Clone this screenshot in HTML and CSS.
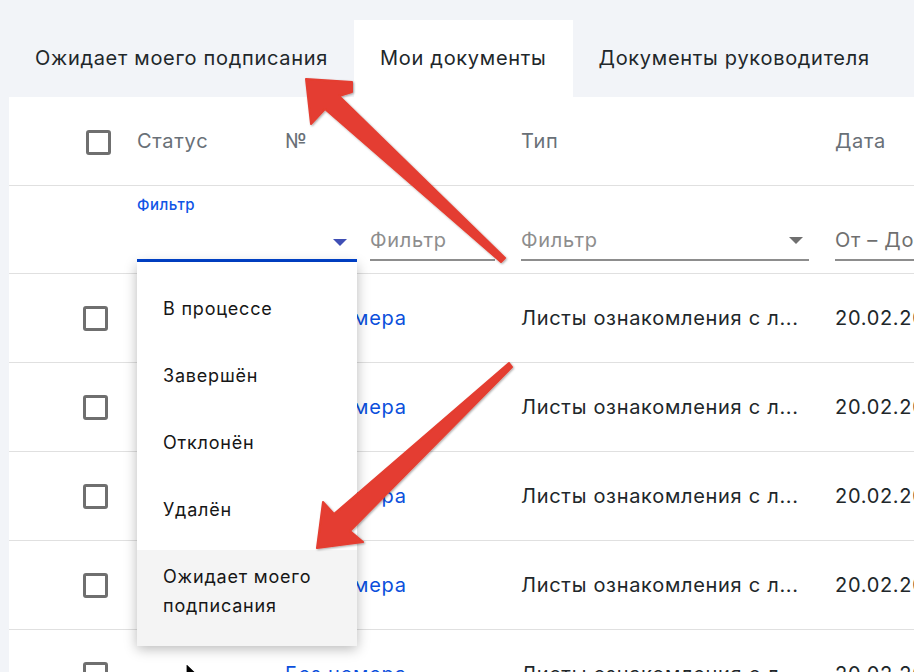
FILE: index.html
```html
<!DOCTYPE html>
<html lang="ru">
<head>
  <meta charset="UTF-8">
  <title>Мои документы</title>
  <link rel="stylesheet" href="styles.css">
</head>
<body>
  <div class="tabs">
    <div class="tab">Ожидает моего подписания</div>
    <div class="tab active">Мои документы</div>
    <div class="tab">Документы руководителя</div>
  </div>

  <div class="panel">
    <div class="row head">
      <div class="check"><span class="box"></span></div>
      <div class="c-status">Статус</div>
      <div class="c-num">№</div>
      <div class="c-type">Тип</div>
      <div class="c-date">Дата</div>
    </div>

    <div class="filters">
      <div class="f-status">
        <label>Фильтр</label>
        <div class="select"><span class="caret blue"></span></div>
        <ul class="menu">
          <li>В процессе</li>
          <li>Завершён</li>
          <li>Отклонён</li>
          <li>Удалён</li>
          <li class="hover">Ожидает моего подписания</li>
        </ul>
      </div>
      <div class="field f-num">Фильтр</div>
      <div class="field f-type">Фильтр <span class="caret"></span></div>
      <div class="field f-date">От – До</div>
    </div>

    <div class="row">
      <div class="check"><span class="box"></span></div>
      <div class="c-status"></div>
      <div class="c-num"><a href="#">Без номера</a></div>
      <div class="c-type">Листы ознакомления с л...</div>
      <div class="c-date">20.02.2024</div>
    </div>
    <div class="row">
      <div class="check"><span class="box"></span></div>
      <div class="c-status"></div>
      <div class="c-num"><a href="#">Без номера</a></div>
      <div class="c-type">Листы ознакомления с л...</div>
      <div class="c-date">20.02.2024</div>
    </div>
    <div class="row">
      <div class="check"><span class="box"></span></div>
      <div class="c-status"></div>
      <div class="c-num"><a href="#">Без номера</a></div>
      <div class="c-type">Листы ознакомления с л...</div>
      <div class="c-date">20.02.2024</div>
    </div>
    <div class="row">
      <div class="check"><span class="box"></span></div>
      <div class="c-status"></div>
      <div class="c-num"><a href="#">Без номера</a></div>
      <div class="c-type">Листы ознакомления с л...</div>
      <div class="c-date">20.02.2024</div>
    </div>
    <div class="row">
      <div class="check"><span class="box"></span></div>
      <div class="c-status"></div>
      <div class="c-num"><a href="#" class="under">Без номера</a></div>
      <div class="c-type">Листы ознакомления с л...</div>
      <div class="c-date">20.02.2024</div>
    </div>
  </div>

  <!-- annotation arrows drawn over the screenshot -->
  <svg class="arrows" width="914" height="672" viewBox="0 0 914 672">
    <defs>
      <filter id="sh" x="-10%" y="-10%" width="130%" height="130%">
        <feDropShadow dx="1" dy="1" stdDeviation="0.8" flood-color="#000" flood-opacity="0.35"/>
      </filter>
    </defs>
    <g fill="#e43d30" stroke="#e43d30" stroke-width="2" stroke-linejoin="round" filter="url(#sh)">
      <polygon points="306,79 352,82 352,92 339,96 505,258 501,262 325,109 311,124"/>
      <polygon points="317,548 323,502 334,514 509,363 512,367 350,531 363,542"/>
    </g>
  </svg>

  <svg class="cursor" width="16" height="24" viewBox="0 0 16 24">
    <path d="M1 1 L1 19 L5.5 14.5 L8.5 21.5 L11 20.5 L8 13.5 L14 13.5 Z" fill="#000" stroke="#fff" stroke-width="1.2" stroke-linejoin="round"/>
  </svg>
</body>
</html>
```

FILE: styles.css
```css
html, body {
  margin: 0;
  height: 100%;
  overflow: hidden;
}
body {
  background: #f2f4f8;
  font-family: 'Inter', sans-serif;
  color: #21272a;
  font-size: 20px;
  letter-spacing: 0.7px;
  position: relative;
}
.tabs {
  display: flex;
  padding-top: 20px;
  margin-left: 9px;
}
.tab {
  height: 77px;
  line-height: 77px;
  padding: 0 26px;
  white-space: nowrap;
}
.tab.active {
  background: #fff;
}
.panel {
  margin-left: 9px;
  width: 1100px;
  background: #fff;
}
.row {
  display: grid;
  grid-template-columns: 128px 148px 236px 314px 274px;
  height: 88px;
  align-items: center;
  border-bottom: 1px solid #e0e0e0;
  white-space: nowrap;
}
.row.head {
  color: #697077;
}
.check {
  padding-left: 74px;
  display: flex;
}
.head .check {
  padding-left: 77px;
}
.box {
  width: 19px;
  height: 19px;
  border: 3px solid #6f6f6f;
  border-radius: 3px;
}
.head .box {
  margin-top: 2px;
}
.row a {
  color: #0b4fdc;
  text-decoration: none;
}
.row a.under {
  text-decoration: underline;
}
.filters {
  display: flex;
  align-items: flex-end;
  height: 88px;
  padding-bottom: 11px;
  box-sizing: border-box;
  border-bottom: 1px solid #e0e0e0;
}
.f-status {
  position: relative;
  margin-left: 128px;
  width: 220px;
}
.f-status label {
  display: block;
  font-size: 15px;
  font-weight: 500;
  letter-spacing: 0.5px;
  color: #0f55e6;
  margin-bottom: 11px;
}
.select {
  height: 34px;
  border-bottom: 3px solid #0043ce;
  display: flex;
  justify-content: flex-end;
  align-items: center;
  padding-right: 10px;
}
.caret {
  width: 0;
  height: 0;
  border-left: 7px solid transparent;
  border-right: 7px solid transparent;
  border-top: 7px solid #6f6f6f;
}
.caret.blue {
  border-top-color: #3f4fb5;
}
.field {
  height: 38px;
  border-bottom: 2px solid #8d8d8d;
  color: #8d8d8d;
  display: flex;
  align-items: center;
  justify-content: space-between;
  white-space: nowrap;
  margin-bottom: 1px;
}
.f-num {
  margin-left: 13px;
  width: 125px;
}
.f-type {
  margin-left: 26px;
  width: 282px;
  padding-right: 6px;
}
.f-date {
  margin-left: 26px;
  width: 200px;
  color: #6f6f6f;
}
.menu {
  position: absolute;
  top: 100%;
  left: 0;
  width: 220px;
  margin: 0;
  padding: 20px 0 0;
  list-style: none;
  background: #fff;
  box-shadow: 0 3px 12px rgba(0, 0, 0, 0.28);
  font-size: 18px;
  letter-spacing: 0.8px;
  color: #161616;
  z-index: 2;
}
.menu li {
  padding: 12px 26px 26px;
  line-height: 29px;
}
.menu li.hover {
  background: #f4f4f4;
  padding-right: 40px;
}
.arrows {
  position: absolute;
  left: 0;
  top: 0;
  z-index: 5;
  pointer-events: none;
}
.cursor {
  position: absolute;
  left: 185px;
  top: 662px;
  z-index: 6;
}
```
